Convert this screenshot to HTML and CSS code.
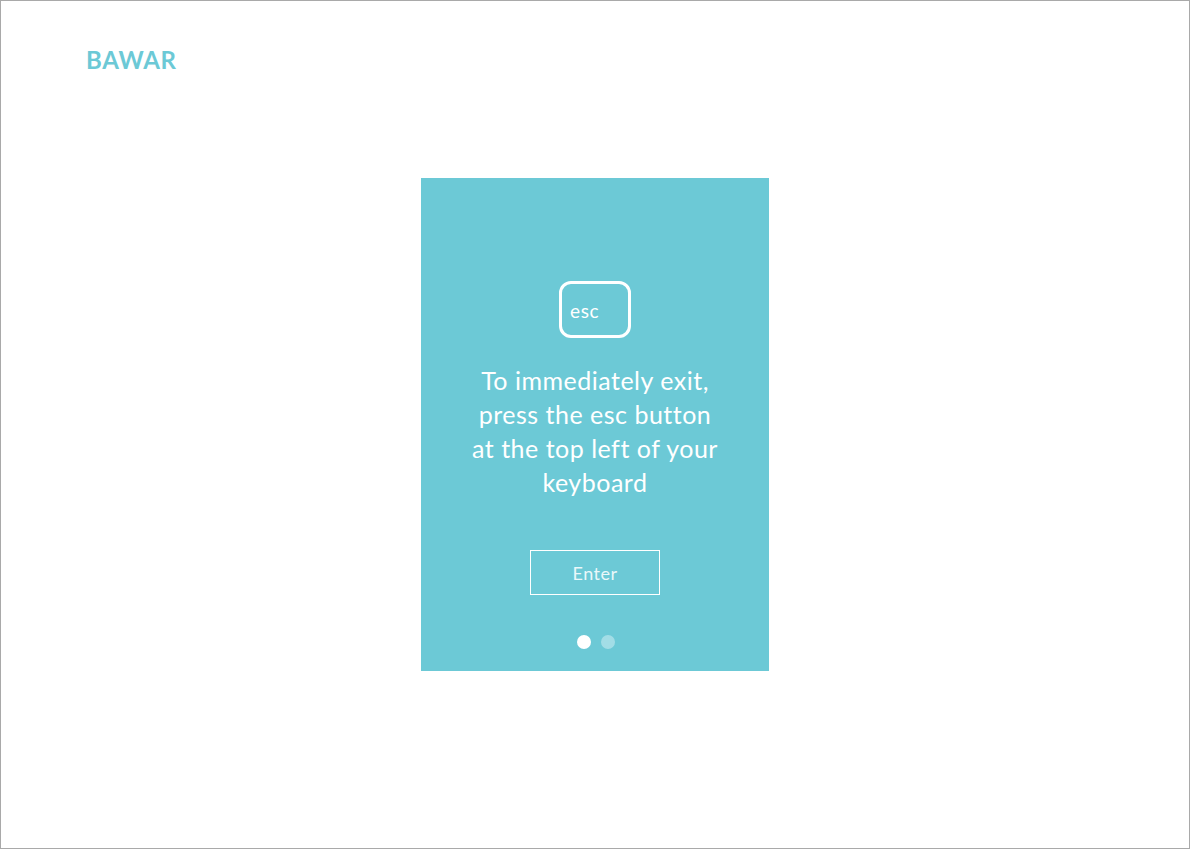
FILE: index.html
```html
<!DOCTYPE html>
<html lang="en">
<head>
<meta charset="utf-8">
<title>BAWAR</title>
<link rel="stylesheet" href="styles.css">
</head>
<body>
<div class="page">
  <header class="header">
    <div class="logo">BAWAR</div>
  </header>
  <section class="card">
    <div class="esc-key"><span>esc</span></div>
    <p class="message">To immediately exit,<br>press the esc button<br>at the top left of your<br>keyboard</p>
    <button class="enter-btn" type="button">Enter</button>
    <div class="dots">
      <span class="dot active"></span>
      <span class="dot"></span>
    </div>
  </section>
</div>
</body>
</html>
```
FILE: styles.css
```css
* { box-sizing: border-box; }
html, body { margin: 0; padding: 0; }
body {
  background: #fff;
  font-family: Lato, "Open Sans", "Liberation Sans", sans-serif;
}
.page {
  width: 1190px;
  height: 849px;
  border: 1px solid #a9a9a9;
  display: grid;
  grid-template-rows: 177px 493px 1fr;
}
.header {
  padding: 44px 0 0 85px;
}
.logo {
  color: #6cc9d6;
  font-size: 24px;
  font-weight: 700;
  letter-spacing: 0.7px;
  line-height: 30px;
}
.card {
  justify-self: center;
  width: 348px;
  height: 493px;
  background: #6cc9d6;
  display: flex;
  flex-direction: column;
  align-items: center;
  padding-top: 103px;
  color: #fff;
}
.esc-key {
  width: 72px;
  height: 57px;
  border: 3px solid #fff;
  border-radius: 12px;
  display: flex;
  align-items: center;
  padding-left: 8px;
  font-size: 19px;
  letter-spacing: 0.6px;
  padding-top: 2px;
}
.message {
  margin: 25px 0 0;
  font-size: 25px;
  line-height: 34px;
  text-align: center;
  font-weight: 400;
  letter-spacing: 0.5px;
}
.enter-btn {
  margin-top: 51px;
  width: 130px;
  height: 45px;
  border: 1px solid #fff;
  background: transparent;
  color: #eaf8fa;
  font-family: inherit;
  font-size: 18px;
  font-weight: 400;
  letter-spacing: 0.5px;
  padding: 0;
}
.dots {
  margin-top: 40px;
  margin-left: 2px;
  display: flex;
  gap: 10px;
}
.dot {
  width: 14px;
  height: 14px;
  border-radius: 50%;
  background: #a2dde6;
}
.dot.active { background: #fff; }
```
